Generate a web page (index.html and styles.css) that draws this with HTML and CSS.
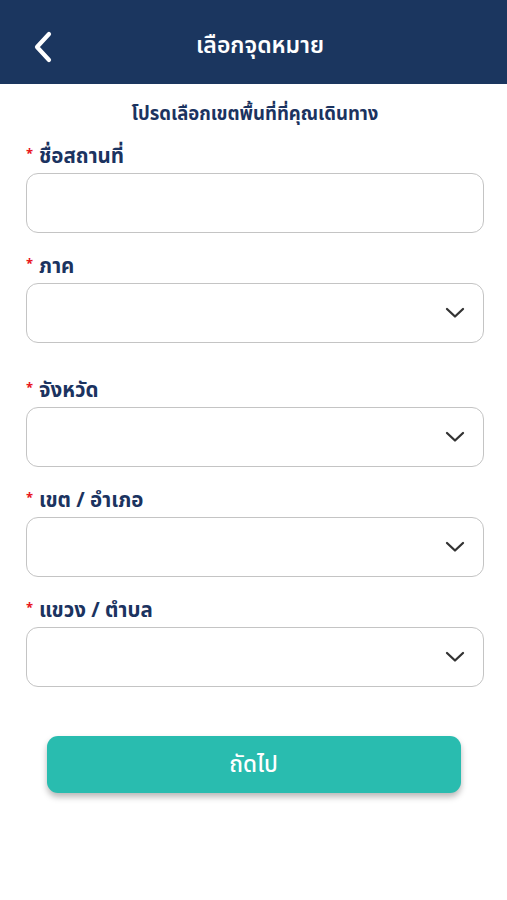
FILE: index.html
```html
<!DOCTYPE html>
<html lang="th">
<head>
<meta charset="utf-8">
<link rel="stylesheet" href="styles.css">
</head>
<body>
<header class="topbar">
  <span class="back">
    <svg width="22" height="32" viewBox="0 0 22 32"><path d="M17 3 L5 16 L17 29" fill="none" stroke="#fff" stroke-width="4.2" stroke-linecap="round" stroke-linejoin="round"/></svg>
  </span>
  <h1 class="title">เลือกจุดหมาย</h1>
</header>
<main class="content">
  <p class="subtitle">โปรดเลือกเขตพื้นที่ที่คุณเดินทาง</p>
  <div class="field">
    <label class="label"><span class="req">*</span>ชื่อสถานที่</label>
    <div class="box"></div>
  </div>
  <div class="field gap-lg">
    <label class="label"><span class="req">*</span>ภาค</label>
    <div class="box select"><svg class="chev" width="20" height="12" viewBox="0 0 20 12"><path d="M2 2 L10 9.5 L18 2" fill="none" stroke="#333" stroke-width="2.3" stroke-linecap="round" stroke-linejoin="round"/></svg></div>
  </div>
  <div class="field">
    <label class="label"><span class="req">*</span>จังหวัด</label>
    <div class="box select"><svg class="chev" width="20" height="12" viewBox="0 0 20 12"><path d="M2 2 L10 9.5 L18 2" fill="none" stroke="#333" stroke-width="2.3" stroke-linecap="round" stroke-linejoin="round"/></svg></div>
  </div>
  <div class="field">
    <label class="label"><span class="req">*</span>เขต / อำเภอ</label>
    <div class="box select"><svg class="chev" width="20" height="12" viewBox="0 0 20 12"><path d="M2 2 L10 9.5 L18 2" fill="none" stroke="#333" stroke-width="2.3" stroke-linecap="round" stroke-linejoin="round"/></svg></div>
  </div>
  <div class="field">
    <label class="label"><span class="req">*</span>แขวง / ตำบล</label>
    <div class="box select"><svg class="chev" width="20" height="12" viewBox="0 0 20 12"><path d="M2 2 L10 9.5 L18 2" fill="none" stroke="#333" stroke-width="2.3" stroke-linecap="round" stroke-linejoin="round"/></svg></div>
  </div>
  <div class="actions">
    <button class="next">ถัดไป</button>
  </div>
</main>
</body>
</html>
```
FILE: styles.css
```css
* { box-sizing: border-box; }
html, body { margin: 0; padding: 0; background: #fff; }
body {
  width: 507px;
  height: 900px;
  font-family: "Noto Sans Thai", "Noto Sans", "DejaVu Sans", sans-serif;
  color: #1b3360;
}
.topbar {
  height: 84px;
  background: #1b365f;
  display: flex;
  align-items: center;
  justify-content: center;
  position: relative;
}
.back {
  position: absolute;
  left: 32px;
  top: 31px;
  display: flex;
}
.title {
  margin: 0;
  color: #fff;
  font-size: 23px;
  font-weight: 600;
  line-height: 30px;
  padding-left: 13px;
  padding-top: 8px;
}
.content {
  padding: 18px 23px 0 26px;
}
.subtitle {
  margin: 0 0 18px;
  text-align: center;
  font-size: 18.5px;
  font-weight: 700;
  line-height: 24px;
  color: #1b3360;
}
.field { margin-bottom: 21px; }
.field.gap-lg { margin-bottom: 35px; }
.label {
  display: flex;
  align-items: center;
  height: 24px;
  font-size: 20.5px;
  font-weight: 700;
  color: #1b3360;
  margin-bottom: 5px;
}
.req {
  color: #e8141b;
  font-size: 13px;
  margin-right: 6px;
  margin-left: 0;
  position: relative;
  top: -2px;
}
.box {
  height: 60px;
  border: 1.5px solid #c4c4c4;
  border-radius: 12px;
  background: #fff;
  display: flex;
  align-items: center;
  justify-content: flex-end;
  padding-right: 18px;
}
.actions {
  display: flex;
  justify-content: center;
  padding-top: 28px;
  padding-right: 3px;
}
.next {
  width: 414px;
  height: 57px;
  border: none;
  border-radius: 11px;
  background: #29bcaf;
  color: #fff;
  font-family: inherit;
  font-size: 22.5px;
  font-weight: 500;
  box-shadow: 0 4px 6px rgba(0,0,0,0.28);
}
```
